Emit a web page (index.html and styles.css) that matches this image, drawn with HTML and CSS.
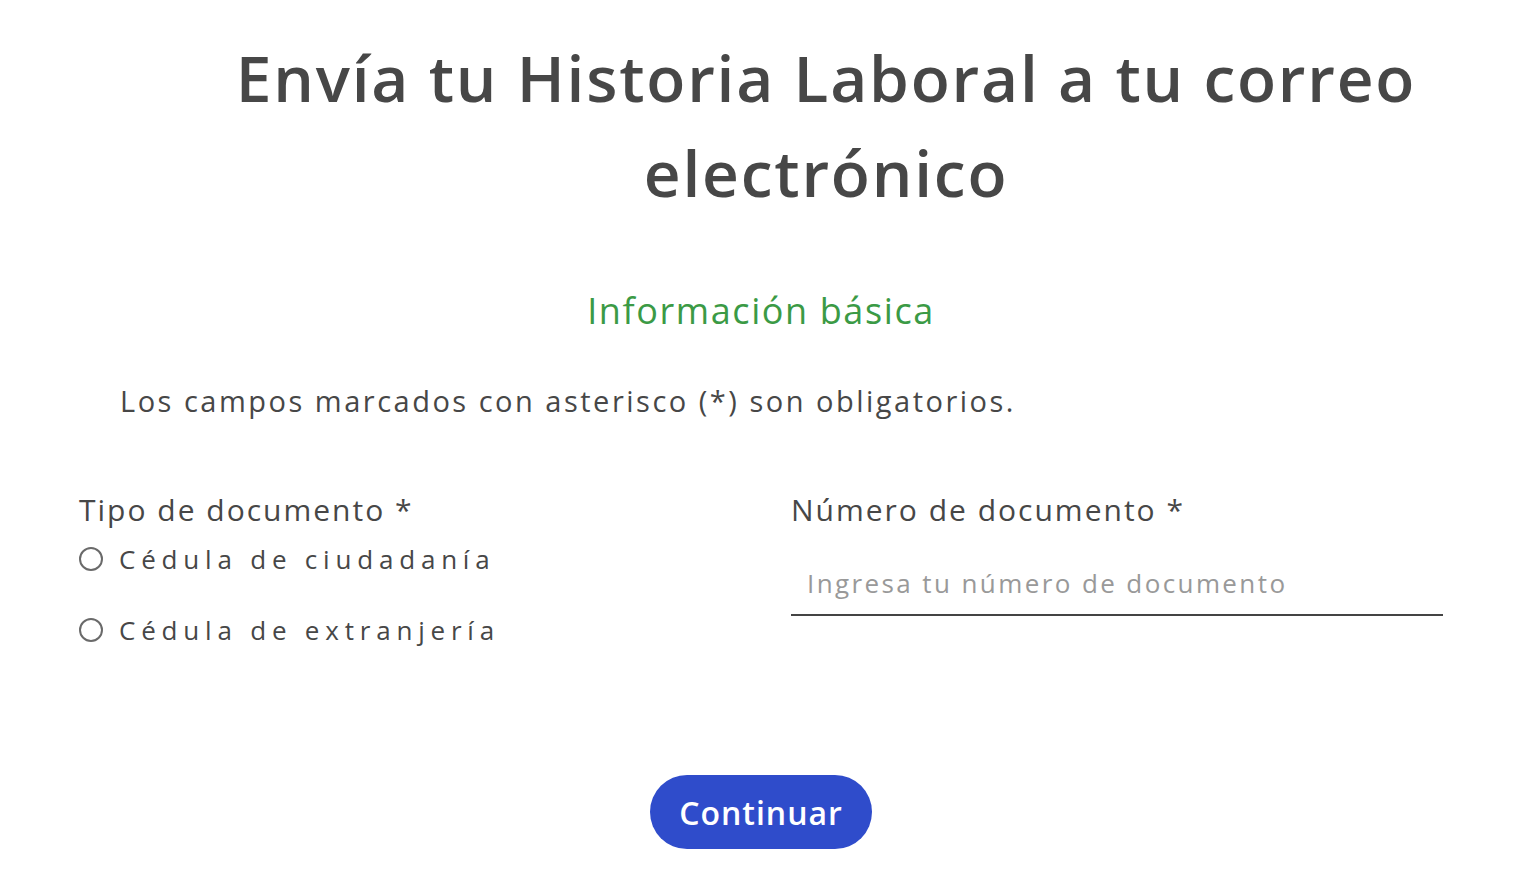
FILE: index.html
```html
<!DOCTYPE html>
<html lang="es">
<head>
<meta charset="utf-8">
<title>Historia Laboral</title>
<link rel="stylesheet" href="styles.css">
</head>
<body>
<main class="page">
  <h1 class="title">Envía tu Historia Laboral a tu correo electrónico</h1>
  <section class="form">
    <h2 class="subtitle">Información básica</h2>
    <p class="note">Los campos marcados con asterisco (*) son obligatorios.</p>
    <div class="fields">
      <div class="field">
        <div class="label">Tipo de documento *</div>
        <div class="radios">
          <label class="radio"><span class="circle"></span><span class="radio-text">Cédula de ciudadanía</span></label>
          <label class="radio"><span class="circle"></span><span class="radio-text">Cédula de extranjería</span></label>
        </div>
      </div>
      <div class="field">
        <div class="label">Número de documento *</div>
        <div class="input"><span class="placeholder">Ingresa tu número de documento</span></div>
      </div>
    </div>
    <div class="actions">
      <button class="btn" type="button">Continuar</button>
    </div>
  </section>
</main>
</body>
</html>
```
FILE: styles.css
```css
html, body {
  margin: 0;
  padding: 0;
  background: #ffffff;
}
.page {
  width: 1530px;
  color: #474747;
  font-family: "Open Sans", "DejaVu Sans", sans-serif;
}
.title {
  margin: 0;
  padding: 30px 0 0 122px;
  text-align: center;
  font-family: "Open Sans", sans-serif;
  font-weight: 600;
  font-size: 64px;
  line-height: 95px;
  color: #474747;
  letter-spacing: 1.8px;
}
.form {
  width: 1364px;
  margin-left: 79px;
}
.subtitle {
  margin: 69px 0 0 0;
  text-align: center;
  font-family: "Open Sans", sans-serif;
  font-weight: 500;
  font-size: 36px;
  line-height: 44px;
  letter-spacing: 1.6px;
  color: #3b9a45;
}
.note {
  margin: 50px 0 0 41px;
  font-size: 29px;
  line-height: 36px;
  letter-spacing: 2.5px;
}
.fields {
  display: grid;
  grid-template-columns: 652px 652px;
  column-gap: 60px;
  margin-top: 73px;
}
.label {
  font-size: 30px;
  line-height: 36px;
  letter-spacing: 2px;
}
.radios {
  display: flex;
  flex-direction: column;
  gap: 23px;
  margin-top: 7px;
}
.radio {
  display: flex;
  align-items: center;
  height: 48px;
  gap: 16px;
}
.circle {
  width: 20px;
  height: 20px;
  border: 2px solid #6a6a6a;
  border-radius: 50%;
  flex: none;
}
.radio-text {
  font-size: 26px;
  letter-spacing: 5.8px;
}
.input {
  margin-top: 20px;
  height: 62px;
  padding-top: 4px;
  border-bottom: 2px solid #444;
  display: flex;
  align-items: center;
  padding-left: 16px;
}
.placeholder {
  font-size: 26px;
  letter-spacing: 2.4px;
  color: #999999;
}
.actions {
  display: flex;
  justify-content: center;
  margin-top: 121px;
}
.btn {
  width: 222px;
  height: 74px;
  border: none;
  border-radius: 37px;
  background: #2f4ccb;
  color: #ffffff;
  font-family: "Open Sans", sans-serif;
  font-weight: 600;
  font-size: 32px;
  letter-spacing: 1px;
}
```
